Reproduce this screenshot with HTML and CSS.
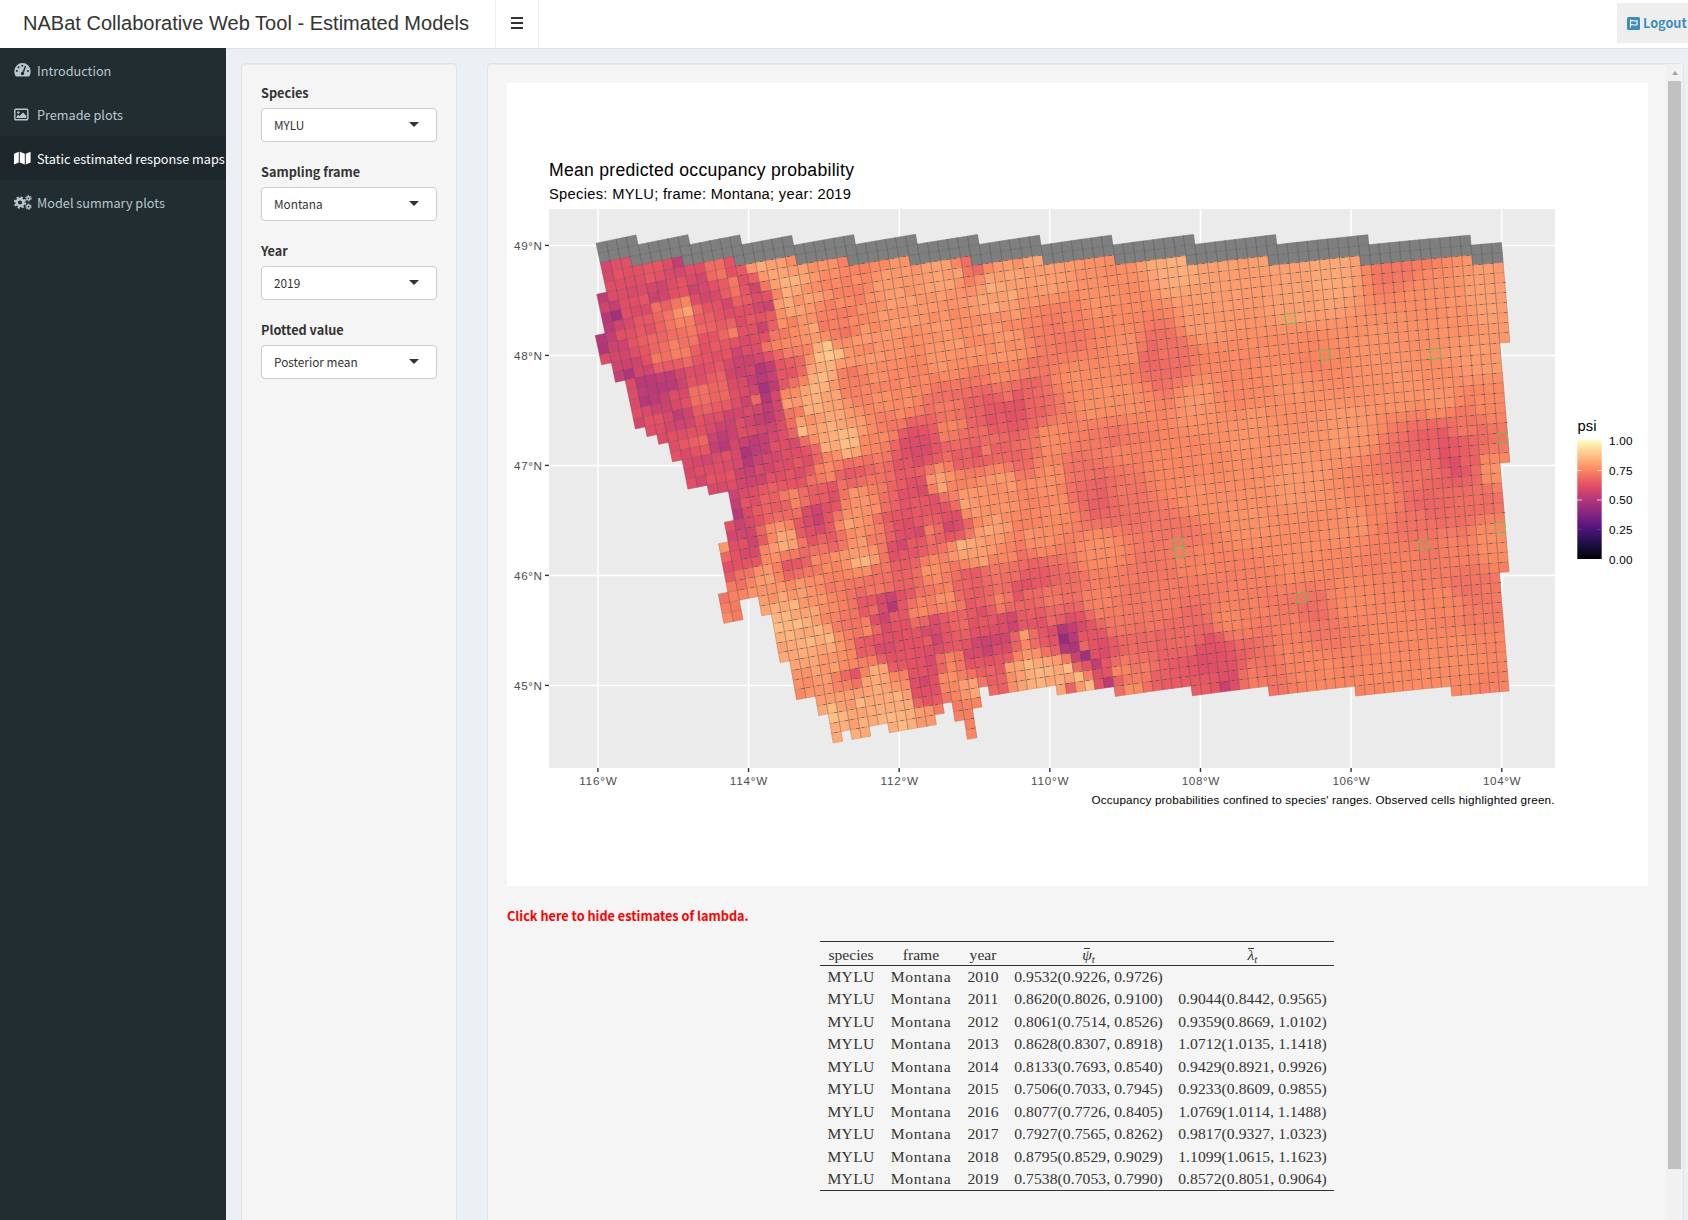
FILE: index.html
```html
<!DOCTYPE html>
<html lang="en">
<head>
<meta charset="utf-8">
<title>NABat Collaborative Web Tool - Estimated Models</title>
<link rel="stylesheet" href="styles.css">
</head>
<body>
<header class="header">
  <div class="brand">NABat Collaborative Web Tool - Estimated Models</div>
  <div class="toggle"><span></span><span></span><span></span></div>
  <a class="logout"><svg width="13" height="13" viewBox="0 0 13 13"><rect width="13" height="13" rx="1.5" fill="#3c8dbc"/><path d="M3.5 2.5v8M3.5 3.8c2-.8 3.500.8 6.500 0v4c-3 .8-4.500-.8-6.500 0" fill="none" stroke="#fff" stroke-width="1.1"/></svg><span>Logout</span></a>
</header>
<div class="shell">
  <nav class="sidebar">
    <a class="item"><svg class="ico" width="17" height="14" viewBox="0 0 17 14"><path fill="#b8c7ce" d="M8.500 0A8.200 8.200 0 0 0 .3 8.200c0 1.800.5 3.400 1.300 4.700.2.300.5.500.8.500h12.200c.300 0 .600-.2.800-.5.800-1.300 1.300-2.900 1.300-4.700A8.200 8.200 0 0 0 8.500 0z"/><g fill="#222d32"><circle cx="8.300" cy="2.700" r="1"/><circle cx="4.500" cy="4.300" r="1"/><circle cx="2.900" cy="8" r="1"/><circle cx="14" cy="8" r="1"/><circle cx="8.500" cy="10.500" r="1.700"/><path d="M11 2.800l1.200.4-2.700 7.500-1.500-.5z"/></g></svg><span>Introduction</span></a>
    <a class="item"><svg class="ico" width="15" height="13" viewBox="0 0 15 13"><rect x=".8" y="1.300" width="13" height="10.400" rx="1" fill="none" stroke="#b8c7ce" stroke-width="1.400"/><circle cx="4.300" cy="4.500" r="1.200" fill="#b8c7ce"/><path d="M2.500 10V8.500l1.800-1.800L5.500 8l3.500-3.600 3.300 3.300V10z" fill="#b8c7ce"/></svg><span>Premade plots</span></a>
    <a class="item active"><svg class="ico" width="17" height="14" viewBox="0 0 17 14"><path fill="#fff" d="M0 2.800L4.800.8v10.700L0 13.500zM5.800.8l5 1.900v10.700l-5-1.900zM11.800 2.700l4.800-2v10.700l-4.800 2z"/></svg><span>Static estimated response maps</span></a>
    <a class="item"><svg class="ico" width="18" height="15" viewBox="0 0 18 15"><g fill="none" stroke="#b8c7ce"><circle cx="6" cy="7.500" r="3.400" stroke-width="2.600"/><circle cx="6" cy="7.500" r="5.200" stroke-width="1.900" stroke-dasharray="2.180 1.900"/><circle cx="14.500" cy="3.300" r="1.600" stroke-width="1.500"/><circle cx="14.500" cy="3.300" r="2.700" stroke-width="1" stroke-dasharray="1.600 1.230"/><circle cx="14.500" cy="11.700" r="1.600" stroke-width="1.500"/><circle cx="14.500" cy="11.700" r="2.700" stroke-width="1" stroke-dasharray="1.600 1.230"/></g></svg><span>Model summary plots</span></a>
  </nav>
  <main class="content">
    <form class="well controls">
      <label>Species</label><div class="select">MYLU<i></i></div>
      <label>Sampling frame</label><div class="select">Montana<i></i></div>
      <label>Year</label><div class="select">2019<i></i></div>
      <label>Plotted value</label><div class="select">Posterior mean<i></i></div>
    </form>
    <section class="well results">
      <div class="results-body">
        <svg class="plot" width="1141" height="803" viewBox="507 83 1141 803">
          <defs>
            <linearGradient id="magma" x1="0" y1="1" x2="0" y2="0">
              <stop offset="0" stop-color="#000004"/><stop offset=".125" stop-color="#1c1044"/><stop offset=".25" stop-color="#4f127b"/><stop offset=".375" stop-color="#812581"/><stop offset=".5" stop-color="#b5367a"/><stop offset=".625" stop-color="#e55064"/><stop offset=".75" stop-color="#fb8761"/><stop offset=".875" stop-color="#fec287"/><stop offset="1" stop-color="#fcfdbf"/>
            </linearGradient>
          </defs>
          <rect x="549" y="209" width="1006" height="559" fill="#ebebeb"/>
          <g id="graticule"></g>
          <g id="cells"></g>
          <g class="plot-text">
            <text x="549" y="176" font-size="17.600" textLength="305">Mean predicted occupancy probability</text>
            <text x="549" y="199" font-size="14.700" textLength="302">Species: MYLU; frame: Montana; year: 2019</text>
            <text x="1091.500" y="804" font-size="11.700" textLength="463">Occupancy probabilities confined to species' ranges. Observed cells highlighted green.</text>
            <text x="1577.500" y="431" font-size="14.700" textLength="19">psi</text>
            <g font-size="11.700"><text x="1609" y="445" textLength="23.500">1.00</text><text x="1609" y="474.700" textLength="23.500">0.75</text><text x="1609" y="504.400" textLength="23.500">0.50</text><text x="1609" y="534" textLength="23.500">0.25</text><text x="1609" y="563.700" textLength="23.500">0.00</text></g>
          </g>
          <rect x="1577.300" y="440.300" width="24.400" height="118.700" fill="url(#magma)"/>
          <path d="M1577 470.500h5M1597 470.500h5M1577 500h5M1597 500h5" stroke="#fff" stroke-opacity=".75"/>
          <path d="M1577 529.500h5M1597 529.500h5" stroke="#fff" stroke-opacity=".12"/>
        </svg>
        <a class="toggle-link">Click here to hide estimates of lambda.</a>
        <table class="estimates">
          <colgroup><col class="c1"><col class="c2"><col class="c3"><col class="c4"><col class="c5"></colgroup>
          <thead><tr><th>species</th><th class="fr">frame</th><th>year</th><th><span class="bar"><i>ψ</i></span><sub>t</sub></th><th><span class="bar"><i>λ</i></span><sub>t</sub></th></tr></thead>
          <tbody>
            <tr><td>MYLU</td><td>Montana</td><td>2010</td><td>0.9532(0.9226, 0.9726)</td><td></td></tr>
            <tr><td>MYLU</td><td>Montana</td><td>2011</td><td>0.8620(0.8026, 0.9100)</td><td>0.9044(0.8442, 0.9565)</td></tr>
            <tr><td>MYLU</td><td>Montana</td><td>2012</td><td>0.8061(0.7514, 0.8526)</td><td>0.9359(0.8669, 1.0102)</td></tr>
            <tr><td>MYLU</td><td>Montana</td><td>2013</td><td>0.8628(0.8307, 0.8918)</td><td>1.0712(1.0135, 1.1418)</td></tr>
            <tr><td>MYLU</td><td>Montana</td><td>2014</td><td>0.8133(0.7693, 0.8540)</td><td>0.9429(0.8921, 0.9926)</td></tr>
            <tr><td>MYLU</td><td>Montana</td><td>2015</td><td>0.7506(0.7033, 0.7945)</td><td>0.9233(0.8609, 0.9855)</td></tr>
            <tr><td>MYLU</td><td>Montana</td><td>2016</td><td>0.8077(0.7726, 0.8405)</td><td>1.0769(1.0114, 1.1488)</td></tr>
            <tr><td>MYLU</td><td>Montana</td><td>2017</td><td>0.7927(0.7565, 0.8262)</td><td>0.9817(0.9327, 1.0323)</td></tr>
            <tr><td>MYLU</td><td>Montana</td><td>2018</td><td>0.8795(0.8529, 0.9029)</td><td>1.1099(1.0615, 1.1623)</td></tr>
            <tr><td>MYLU</td><td>Montana</td><td>2019</td><td>0.7538(0.7053, 0.7990)</td><td>0.8572(0.8051, 0.9064)</td></tr>
          </tbody>
        </table>
      </div>
      <div class="scrollbar"><b></b><div class="thumb"></div></div>
    </section>
  </main>
</div>
<script src="map.js"></script>
</body>
</html>
```
FILE: styles.css
```css
* { box-sizing: border-box; }
body {
  margin: 0;
  height: 1220px;
  overflow: hidden;
  display: flex;
  flex-direction: column;
  font: 12.7px/20px "Noto Sans CJK SC", "Open Sans", sans-serif;
  color: #333;
  background: #ecf0f5;
}
.header {
  height: 48px;
  flex: none;
  display: flex;
  background: #fff;
  box-shadow: 0 1px 1px #dfe3e8;
}
.brand {
  width: 495px;
  padding-left: 23px;
  font: 20px/46px "Liberation Sans", Arial, sans-serif;
  letter-spacing: .02px;
  white-space: nowrap;
}
.toggle {
  width: 44px;
  border: solid #eee;
  border-width: 0 1px;
  padding: 17px 0 0 15px;
  display: flex;
  flex-direction: column;
  gap: 3px;
}
.toggle span { width: 12px; height: 2px; background: #333; }
.logout {
  margin: 3px 0 0 auto;
  width: 71px;
  height: 40px;
  padding-left: 10px;
  display: flex;
  align-items: center;
  gap: 3px;
  background: #eee;
  color: #3c8dbc;
  font-weight: 700;
}
.shell { flex: 1; min-height: 0; display: flex; }
.sidebar { width: 226px; flex: none; background: #222d32; color: #b8c7ce; }
.item {
  height: 44px;
  padding-left: 14px;
  display: flex;
  align-items: center;
  white-space: nowrap;
}
.item span { margin-top: 1px; }
.ico { flex: none; margin-right: auto; }
.item { display: grid; grid-template-columns: 23px 1fr; }
.active { background: #1e282c; color: #fff; }
.content { flex: 1; min-width: 0; display: flex; padding: 15px 4px 0 15px; gap: 30px; }
.well {
  height: 1300px;
  background: #f5f5f5;
  border: 1px solid #e3e3e3;
  border-radius: 4px;
  box-shadow: inset 0 1px 1px rgba(0, 0, 0, .05);
}
.controls { width: 216px; flex: none; padding: 19px; }
.controls label { display: block; height: 25px; font-weight: 700; }
.select {
  height: 34px;
  margin-bottom: 20px;
  padding: 0 17px 0 12px;
  display: flex;
  align-items: center;
  justify-content: space-between;
  background: #fff;
  border: 1px solid #ccc;
  border-radius: 4px;
  font-size: 11.8px;
}
.select i { border: 5px solid transparent; border-top-color: #333; border-bottom: 0; margin-top: -2px; }
.results { flex: 1; min-width: 0; display: flex; }
.results-body { flex: 1; padding: 19px 0 0 19px; }
.plot { display: block; background: #fff; }
.plot text { font-family: "Liberation Sans", Arial, sans-serif; }
.toggle-link { display: block; margin-top: 20px; color: #f00; font-weight: 700; }
.scrollbar { width: 17px; background: #f1f1f1; padding: 7px 2px 0; }
.scrollbar b { display: block; width: 0; margin: 0 auto; border: 3.5px solid transparent; border-bottom: 4px solid #a3a3a3; border-top: 0; }
.thumb { height: 1088px; margin-top: 6px; background: #c1c1c1; }
.estimates {
  margin: 15px 0 0 313px;
  width: 514px;
  table-layout: fixed;
  border-collapse: collapse;
  border: solid #333;
  border-width: 1px 0;
  font: 15.6px/22px "Liberation Serif", "Times New Roman", serif;
  text-align: center;
}
.c1 { width: 62px; } .c2 { width: 78px; } .c3 { width: 46px; } .c4 { width: 165px; } .c5 { width: 163px; }
.estimates th { font-weight: 400; padding: 2px 0 0; height: 24px; line-height: 21px; border-bottom: 1px solid #333; }
.estimates td { padding: 0; height: 22.5px; white-space: nowrap; }
.estimates td:nth-child(1) { letter-spacing: .3px; }
.estimates td:nth-child(2) { letter-spacing: .75px; }
.estimates td:nth-child(n+4) { letter-spacing: .08px; }
.bar { display: inline-block; line-height: 14px; background: linear-gradient(#333, #333) 60% 0 / 6px 1px no-repeat; }
.estimates sub { font-size: 11px; font-style: italic; line-height: 0; vertical-align: -3px; }
```
FILE: map.js
```js
(function () {
  var NS = 'http://www.w3.org/2000/svg';
  function add(parent, tag, attrs, text) {
    var e = document.createElementNS(NS, tag);
    for (var k in attrs) e.setAttribute(k, attrs[k]);
    if (text) e.textContent = text;
    parent.appendChild(e);
    return e;
  }

  // Panel scales: degrees to plot units
  var X0 = 597.9, KX = 75.32, Y0 = 245.4, KY = 110;
  function px(lon) { return X0 + (lon + 116) * KX; }
  function py(lat) { return Y0 + (49 - lat) * KY; }

  var grat = document.getElementById('graticule'), i, j, k;
  for (i = 0; i < 7; i++) {
    var gx = px(-116 + 2 * i);
    add(grat, 'path', { d: 'M' + gx + ' 209V768', stroke: '#fff', 'stroke-width': 1.5 });
    add(grat, 'path', { d: 'M' + gx + ' 768v4', stroke: '#333', 'stroke-width': 1.4 });
    add(grat, 'text', { x: gx - 18.7, y: 785, 'font-size': 11.7, fill: '#4d4d4d', textLength: 37.5 }, (116 - 2 * i) + '°W');
  }
  for (i = 0; i < 5; i++) {
    var gy = py(49 - i);
    add(grat, 'path', { d: 'M549 ' + gy + 'H1555', stroke: '#fff', 'stroke-width': 1.5 });
    add(grat, 'path', { d: 'M545 ' + gy + 'h4', stroke: '#333', 'stroke-width': 1.4 });
    add(grat, 'text', { x: 514, y: gy + 4.5, 'font-size': 11.7, fill: '#4d4d4d', textLength: 28 }, (49 - i) + '°N');
  }

  // Albers equal-area conic, GRS80, parallels 29.5 and 45.5, meridian -96
  var A = 6378137, E2 = 0.00669438, E = Math.sqrt(E2), R = Math.PI / 180;
  function q(p) { var s = Math.sin(p); return (1 - E2) * (s / (1 - E2 * s * s) - Math.log((1 - E * s) / (1 + E * s)) / (2 * E)); }
  function m(p) { var s = Math.sin(p); return Math.cos(p) / Math.sqrt(1 - E2 * s * s); }
  var m1 = m(29.5 * R), m2 = m(45.5 * R), q1 = q(29.5 * R), q2 = q(45.5 * R);
  var n = (m1 * m1 - m2 * m2) / (q2 - q1), C = m1 * m1 + n * q1;
  function fwd(lon, lat) {
    var r = A * Math.sqrt(C - n * q(lat * R)) / n, t = n * (lon + 96) * R;
    return [r * Math.sin(t), -r * Math.cos(t)];
  }
  function inv(x, y) {
    var r = Math.hypot(x, y), t = Math.atan2(x, -y), qq = (C - Math.pow(r * n / A, 2)) / n, p = Math.asin(qq / 2);
    for (var c = 0; c < 5; c++) {
      var s = Math.sin(p), w = 1 - E2 * s * s;
      p += w * w / (2 * Math.cos(p)) * (qq / (1 - E2) - s / w + Math.log((1 - E * s) / (1 + E * s)) / (2 * E));
    }
    return [px(-96 + t / n / R), py(p / R)];
  }
  var O = fwd(-116 + (596.1 - X0) / KX, 49 + (Y0 - 243.3) / KY);
  function corner(c, r) { return inv(O[0] + c * 10000, O[1] - r * 10000); }

  function pairs(s) { var a = s.trim().split(/\s+/).map(function (t) { return t.split(',').map(Number); }); return a; }
  var outline = pairs('596,243 635.7,235.7 637.5,244.7 687.5,235.7 689.6,244.7 739.6,236 741.8,245 791,236 793.6,245.3 853.6,235.3 855.4,244.3 915.4,235 917,244 977,235 979,244 1039.3,236 1041,245 1111,235 1112,244.7 1193,234.7 1194,244.3 1275.3,234.7 1276,244.3 1367.7,235 1368.3,244.3 1469.7,235.3 1470.7,245 1501,242.3 1508.7,342.7 1500,343.3 1508.7,462.7 1500,463.3 1508.2,572.3 1499.5,572.7 1508.2,691 1451.6,696.3 1450.7,687.3 1355.3,696 1354.5,687.3 1269,696 1267.7,687 1192,695.7 1190.8,686.7 1114.8,696.3 1113.5,687.7 1057.5,695.5 1055.5,686.7 989,695.3 987.7,687 978.7,688.3 980.7,707.3 972.7,708.3 976,739 966.7,739.7 963.3,720.3 955,721.7 952,703.3 942.3,704.3 943.3,713.7 934,715.3 935.7,725 889.3,732.7 888,724 868.3,727.3 869.7,736.3 851.7,739.3 850,731 840,732.3 842,741.7 832.3,743 828,714 818,715.7 814.7,697.7 796,699.7 790,661 779.3,662.7 771.3,614 761,615.7 758,597.7 739,600.7 742.3,620.3 723.3,623.3 718,594.3 727.3,593 718.3,544 726.7,542.7 724,522.3 733,521 728.3,492.3 708.7,495 707,486.3 687.3,489.3 682,460.7 672,462.3 668.3,442.7 658,444.2 656.4,435 647,436 645,427.3 634.6,428.7 625.4,381.3 615.4,382.7 611.4,364 601.4,365 595.4,336 605,334.3 596.4,294.3 605,292.3 600,263');
  var north = pairs('590,264.5 600.5,262.7 630.4,257.3 632,266 682,256.7 684,266 733,257 735.7,265.7 795,256 797.5,265.3 847,257 848.6,266 908.6,256.7 910,265.7 970.4,256.3 972,266 1041.8,255.7 1043,265 1113,255.7 1114.7,264.7 1185,256.3 1186,265.3 1267,256 1268.3,265.3 1359,256 1360.3,265.7 1471,256 1472,265 1510,262');
  function inside(x, y) {
    var hit = false;
    for (var a = 0, b = outline.length - 1; a < outline.length; b = a++) {
      var p = outline[a], s = outline[b];
      if ((p[1] > y) !== (s[1] > y) && x < (s[0] - p[0]) * (y - p[1]) / (s[1] - p[1]) + p[0]) hit = !hit;
    }
    return hit;
  }
  function outOfRange(x, y) {
    for (var a = 1; a < north.length; a++) {
      var p = north[a - 1], s = north[a];
      if (x <= s[0]) return y < p[1] + (s[1] - p[1]) * (x - p[0]) / (s[0] - p[0]);
    }
    return false;
  }

  // Sampled occupancy estimates: x,y,percent
  var samples = pairs(
    // regional background
    '620,290,63 640,340,66 660,310,69 690,320,73 680,350,72 720,300,70 700,400,70 660,360,69 660,420,64 720,390,69 700,440,67 735,330,73 770,340,75 790,400,78 780,320,77 735,290,72 715,270,69 800,300,79 900,300,79 950,270,81 1000,290,81 870,350,77.5 900,400,75.5 950,350,78 1000,350,77.5 1050,280,80 1000,380,75 950,430,73 860,400,76 880,440,74 830,470,74 850,500,76 790,500,74 770,530,77 880,540,73 930,530,74 960,480,74 980,450,72 1000,500,76.5 1050,480,76.5 1040,540,76.5 1050,440,76 930,570,77 880,580,75 830,560,75 800,590,78 770,590,78 740,580,71 840,620,73 870,630,73 920,610,75 950,600,76 1000,600,73 1010,560,74 850,660,77 800,660,79 810,690,77 850,700,79 900,680,77 950,680,76 950,660,74 840,735,80 970,730,74 960,710,72 735,605,73 1050,600,71 1050,620,68 1100,550,76.5 1100,600,74 1120,620,72 1130,690,76 1120,670,75 1160,600,72 1150,620,71 1150,670,72 1200,560,74 1230,620,74.5 1250,600,73 1250,680,73 1300,560,76 1350,600,75.5 1400,560,73.5 1450,600,74.5 1460,660,76 1400,670,75.5 1500,640,74.5 1400,620,75 1320,670,75 1300,650,74 1300,630,73 1313,613,69 1321,632,71 1466,588,70 1490,610,71.5 1180,532,71 1500,690,73.5 ' +
    '1100,400,77 1130,350,76.5 1200,320,79 1200,400,78 1210,280,80 1180,268,83 1300,290,80.5 1330,275,82 1300,380,77.5 1250,430,77.5 1300,480,78.5 1350,430,78.5 1380,350,77.5 1400,390,77.5 1420,300,76.5 1397,268,71 1450,320,77 1490,300,80 1480,360,79 1440,400,77.5 1490,400,75 1460,430,71 1420,480,70 1440,490,68 1420,520,70 1380,500,74 1450,550,73 1490,470,77 1490,540,76 1430,540,71 1350,520,77 1250,520,77 1200,500,76.5 1170,470,75 1120,450,74 1060,510,76 1130,400,76.5 1080,380,76 1065,320,74 1070,337,71 1055,323,72 1100,300,77 1118,318,75.5 1158,358,67 1153,354,68 1164,364,69 1165,352,70 1115,442,70 1108,447,72 1080,477,70 1086,489,68 1097,490,67 1102,497,64 1108,497,68 1120,492,71 1310,365,74 1232,395,74.5 ' +
    '1449,442,63 1455,448,65 1447,453,62 1440,451,67 1453,463,61 1459,470,62 1462,460,66 1445,470,65 1438,482,67 1450,480,66 1466,480,67 1430,472,70 1465,500,69 1430,505,67 1471,490,69 ' +
    // southern ranges and Yellowstone
    '1207,650,62 1207,658,61 1207,667,60 1201,672,61 1228,686,55 1234,684,61 1218,676,63 1196,676,64 1196,691,65 1164,645,66 1178,672,64 1187,670,65 1168,683,65 1158,672,66 1208,682,65 1147,640,68 1175,640,68 1190,640,69 1063,638,43 1066,648,50 1074,647,49 1076,657,56 1085,656,45 1094,655,62 1086,666,63 1094.5,663,53 1097,668,57 1106,666,64 1098,675,62 1108,683,52 1114,678,67 1056,640,63 1053,652,66 1085,645,68 1045,670,84 1030,667,84 1015,668,81 1050,660,81 1060,660,80 1068,669,86 1060,682,82 1040,682,84 1025,684,82 1080,679,86 1088,684,86 1078,686,79 1070,689,66 1061,692,81 ' +
    '972,623,62 962,625,67 983,622,64 1003,628,62 1013,627,55 1023,625,65 1040,623,62 1030,632,68 985,642,57 987,651,54 977,653,59 1004,637,57 997,648,60 1006,647,60 998,660,62 980,663,65 1000,678,65 983,673,67 1023,637,79 935,630,58 937,639,58 947,637,63 955,637,64 927,642,64 929,660,60 932,670,60 923,682,59 926,692,61 922,663,64 902,665,63 879,649,58 871,651,65 854,674,64 897,636,61 885,627,61 884,618,58 892,607,49 883,608,60 902,605,64 893,617,64 873,610,67 973,583,65 968,593,66 980,603,65 982,612,62 1027,585,60 1035,583,63 1027,573,66 1017,573,67 1033,593,68 953,526,58 948,518,62 958,535,65 935,509,62 923,492,61 938,520,65 908,523,61 917,522,62 920,533,60 900,535,63 901,545,58 908,553,64 913,543,64 908,575,67 880,578,67 818,520,57 810,531,61 828,527,62 833,497,63 832,537,66 793,565,65 ' +
    '736,503,55 738,514,52 745,502,62 743,512,62 730,527,60 732,537,58 751,532,57 757,520,63 773,508,65 785,505,65 742,543,62 752,543,59 735,555,61 745,553,60 727,568,60 723,548,77 790,540,83 773,550,80 763,580,80 860,550,80 865,558,83 970,503,80 980,550,81 963,545,82 990,530,80 940,483,81 1000,478,80 860,507,79 847,522,79 783,623,85 786,615,85 800,643,83 820,637,84 790,607,83 802,652,84 823,670,80 875,670,84 877,687,83 863,707,83 833,723,84 834,715,85 900,700,84 902,715,85 880,717,83 927,723,80 973,687,82 923,450,60 910,452,62 925,442,62 975,452,63 963,457,66 1010,455,66 998,457,66 1020,450,69 790,473,62 807,452,63 850,473,66 ' +
    // north-west mountains
    '679,262,55 668,263,62 657,268,64 611,268,61 620,262,63 739,270,62 686,277,61 695,277,60 704,288,56 705,297,58 716,295,61 727,303,60 707,317,64 714,307,63 654,298,54 636,300,60 645,300,61 602,298,54 611,297,59 614,306,53 604,308,59 616,316,45 606,318,49 607,328,50 625,323,61 627,313,63 636,310,62 602,340,50 611,337,54 602,348,47 621,333,63 612,348,58 605,358,58 614,357,56 625,353,58 623,365,56 620,375,53 629,373,51 637,370,60 632,387,58 643,390,51 652,389,51 645,400,51 654,399,50 634,395,60 671,387,51 639,407,61 637,423,57 677,415,52 667,417,58 675,402,62 648,423,64 664,433,61 673,440,62 677,453,61 696,462,59 711,428,61 712,438,56 721,435,54 725,445,52 734,443,57 754,440,54 746,430,61 746,452,49 746,462,52 736,455,59 727,455,60 729,463,60 748,472,56 758,470,60 740,467,60 720,475,62 733,477,61 ' +
    '754,287,57 768,305,56 761,297,62 743,322,60 741,330,60 763,327,58 752,320,62 764,337,61 745,340,60 746,350,58 748,360,55 757,353,62 750,370,56 760,368,52 752,378,56 761,378,52 763,388,49 743,380,58 754,388,57 764,398,50 766,407,52 745,390,59 746,400,58 748,410,59 756,400,66 768,417,54 771,425,59 750,420,59 782,435,60 793,442,60 805,452,62 791,367,64 716,357,62 700,370,62 725,345,63 757,268,82 786,303,83 775,283,82 793,290,82 686,312,79 829,353,87 825,367,84 823,377,85 816,400,84 814,330,82 802,432,84 839,437,84 845,443,85 825,437,83 839,413,82 821,327,71 836,333,72 966,262,69 1007,410,61 1000,403,64 998,413,64 1014,413,62 1028,413,66 1003,397,68 850,380,73 793,345,74');

  function value(x, y) {
    var sw = 0, sv = 0;
    for (var a = 0; a < samples.length; a++) {
      var s = samples[a], dx = s[0] - x, dy = s[1] - y, d = dx * dx + dy * dy + 6, w = 1 / (d * d);
      sw += w; sv += w * s[2];
    }
    return sv / sw / 100;
  }
  var ramp = [[0, 0, 4], [28, 16, 68], [79, 18, 123], [129, 37, 129], [181, 54, 122], [229, 80, 100], [251, 135, 97], [254, 194, 135], [252, 253, 191]];
  function color(v) {
    var t = Math.max(0, Math.min(.999, v)) * 8, a = Math.floor(t), f = t - a;
    return 'rgb(' + [0, 1, 2].map(function (c) { return Math.round(ramp[a][c] + (ramp[a + 1][c] - ramp[a][c]) * f); }) + ')';
  }
  var seed = 11;
  function rnd() { seed = (seed * 16807) % 2147483647; return seed / 2147483647 - .5; }

  var observed = pairs('1289.7,319 1324,355 1434.7,354 1502,438 1178,543 1178.4,553 1422.6,545 1301,597.7 1500,527.7');
  var g = document.getElementById('cells'), vert = '', horiz = '', dash = '', green = '';
  for (j = -5; j < 85; j++) for (i = -6; i < 115; i++) {
    var a = corner(i, j), b = corner(i + 1, j), c = corner(i + 1, j + 1), d = corner(i, j + 1);
    var cx = (a[0] + c[0]) / 2, cy = (a[1] + c[1]) / 2;
    if (!inside(cx, cy)) continue;
    var P = [a, b, c, d].map(function (p) { return p[0].toFixed(2) + ' ' + p[1].toFixed(2); });
    var fill = '#7f7f7f';
    if (!outOfRange(cx, cy)) {
      var amp = cx < 870 ? .05 : cx < 1040 ? .035 : .012;
      fill = color(value(cx, cy) + rnd() * amp);
    }
    add(g, 'path', { d: 'M' + P.join('L') + 'Z', fill: fill, stroke: fill, 'stroke-width': .5 });
    vert += 'M' + P[0] + 'L' + P[3] + 'M' + P[1] + 'L' + P[2];
    horiz += 'M' + P[0] + 'L' + P[1] + 'M' + P[3] + 'L' + P[2];
    // darker tick where the row line falls on the middle of a pixel row
    if (cx > 740 && fill !== '#7f7f7f') {
      var slope = (b[1] - a[1]) / (b[0] - a[0]), ty = Math.floor(cy - 5) + .5, tx = a[0] + (ty - a[1]) / slope;
      while (tx > b[0]) { ty -= 1; tx = a[0] + (ty - a[1]) / slope; if (ty < b[1] - 3) break; }
      while (tx < a[0]) { ty -= 1; tx = a[0] + (ty - a[1]) / slope; if (ty < b[1] - 3) break; }
      if (tx >= a[0] && tx <= b[0]) dash += 'M' + (tx - 1.5).toFixed(1) + ' ' + ty + 'h3';
    }
    for (k = 0; k < observed.length; k++)
      if (Math.abs(observed[k][0] - cx) < 5.1 && Math.abs(observed[k][1] - cy) < 4.9) green += 'M' + P.join('L') + 'Z';
  }
  add(g, 'path', { d: vert, fill: 'none', stroke: '#3a4a46', 'stroke-opacity': .38, 'stroke-width': .55 });
  add(g, 'path', { d: horiz, fill: 'none', stroke: '#3a4a46', 'stroke-opacity': .24, 'stroke-width': .5 });
  add(g, 'path', { d: dash, fill: 'none', stroke: '#2f4a48', 'stroke-opacity': .6, 'stroke-width': .8 });
  add(g, 'path', { d: green, fill: 'none', stroke: '#5fe05a', 'stroke-width': .7 });
})();
```
